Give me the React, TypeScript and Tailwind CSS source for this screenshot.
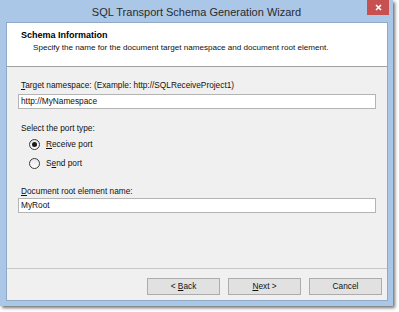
import React from "react";

function Radio({ checked }: { checked?: boolean }) {
  return (
    <span className="w-[11px] h-[11px] rounded-full border border-[#3c3c3c] bg-gradient-to-b from-[#e6e6e6] to-[#ffffff] flex items-center justify-center">
      {checked && <span className="w-[5px] h-[5px] rounded-full bg-[#1a1a1a]" />}
    </span>
  );
}

function Btn({ children }: { children: React.ReactNode }) {
  return (
    <div className="w-[73px] h-[17px] border border-[#acacac] bg-[#e1e1e1] flex items-center justify-center text-[8.3px] text-[#111]">
      <span>{children}</span>
    </div>
  );
}

export default function App() {
  return (
    <div className="w-[399px] h-[312px] bg-white" style={{ fontFamily: '"Liberation Sans", Arial, sans-serif' }}>
      <div className="w-[393px] h-[306px] bg-[#aac7e8] flex flex-col pl-[6px] pr-[5px] pb-[5px] shadow-[2px_2px_3px_rgba(0,0,0,0.55)]">
        <div className="h-[22px] flex items-start relative">
          <div className="absolute left-[-6px] right-[-5px] top-[5px] text-center text-[11px] leading-[15px] text-[#2b2b2b]">
            SQL Transport Schema Generation Wizard
          </div>
          <div className="absolute right-[-1px] top-0 w-[22px] h-[15px] bg-[#c75050] flex items-center justify-center">
            <svg width="7" height="7" viewBox="0 0 7 7">
              <path d="M1 1 L6 6 M6 1 L1 6" stroke="#fff" strokeWidth="1.6" />
            </svg>
          </div>
        </div>
        <div className="flex-1 flex flex-col border border-[#8fa9c6] bg-[#f0f0f0]">
          <div className="h-[44px] bg-white border-b border-[#a0a0a0] flex flex-col pl-[14px] pt-[6px]">
            <div className="text-[9px] font-bold text-black leading-[12px]">Schema Information</div>
            <div className="text-[8.1px] text-[#111] leading-[12px] pl-[12px] mt-[1px]">
              Specify the name for the document target namespace and document root element.
            </div>
          </div>
          <div className="flex-1 flex flex-col pl-[11px] pr-[11px] pt-[12px] text-[8.3px] text-[#111]">
            <div className="pl-[3px] leading-[12px]">
              <span className="underline">T</span>arget namespace: (Example: http://SQLReceiveProject1)
            </div>
            <div className="mt-[3px] h-[15px] bg-white border border-[#b4b4b4] flex items-center pl-[2px]">
              http://MyNamespace
            </div>
            <div className="pl-[3px] mt-[13px] leading-[12px]">Select the port type:</div>
            <div className="flex items-center gap-[6px] pl-[11px] mt-[3px] h-[14px]">
              <Radio checked />
              <span>
                <span className="underline">R</span>eceive port
              </span>
            </div>
            <div className="flex items-center gap-[6px] pl-[11px] mt-[5px] h-[14px]">
              <Radio />
              <span>
                S<span className="underline">e</span>nd port
              </span>
            </div>
            <div className="pl-[3px] mt-[15px] leading-[12px]">
              <span className="underline">D</span>ocument root element name:
            </div>
            <div className="mt-[1px] h-[15px] bg-white border border-[#b4b4b4] flex items-center pl-[2px]">
              MyRoot
            </div>
          </div>
          <div className="h-[32px] border-t border-[#c8c8c8] flex items-start pt-[9px] justify-end gap-[8px] pr-[5px]">
            <Btn>
              &lt; <span className="underline">B</span>ack
            </Btn>
            <Btn>
              <span className="underline">N</span>ext &gt;
            </Btn>
            <Btn>Cancel</Btn>
          </div>
        </div>
      </div>
    </div>
  );
}
